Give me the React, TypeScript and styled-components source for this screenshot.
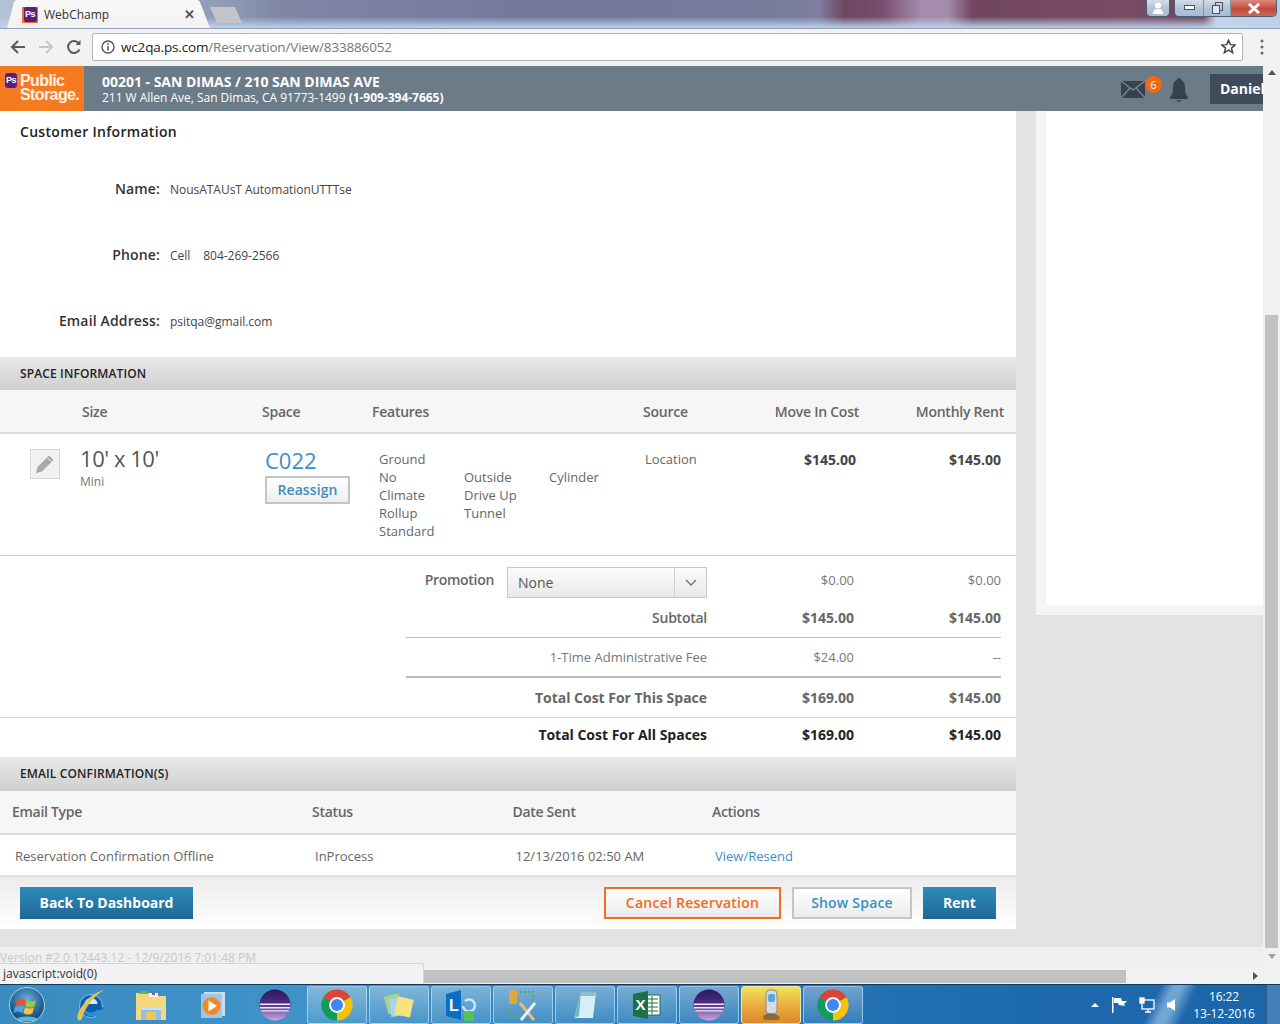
import React from "react";
import styled, { createGlobalStyle } from "styled-components";

const Global = createGlobalStyle`
  html, body { margin: 0; padding: 0; overflow: hidden; }
  body { font-family: "Open Sans", "Liberation Sans", sans-serif; background: #fff; }
  * { box-sizing: border-box; }
`;

const Screen = styled.div`
  width: 1280px; height: 1024px; display: flex; flex-direction: column; overflow: hidden; position: relative;
`;

/* ---------- browser chrome ---------- */
const TitleBar = styled.div`
  height: 29px; position: relative; display: flex; align-items: flex-end; padding-left: 7px; flex: none;
  background:
    linear-gradient(180deg, rgba(255,255,255,0) 0%, rgba(255,255,255,0) 60%, rgba(190,214,238,.95) 100%),
    linear-gradient(90deg, #b5c2d4 0%, #8e9ab4 18%, #7f86a6 22%, #737a9e 40%, #767b9c 60%, #7f7ea0 64%, #6f4560 66%, #7b4f70 69%, #a58cad 72%, #a58cad 74%, #70455f 76%, #7a4d66 88%, #6f4560 94%, #c6d3e4 95%, #b9cde5 100%);
  border-bottom: 1px solid #8fa0b5;
`;
const Tab = styled.div`
  width: 203px; height: 28px; background: linear-gradient(#f8f8f8, #f2f2f2);
  clip-path: polygon(0 100%, 3.500% 6%, 4.500% 0, 94% 0, 95% 6%, 100% 100%);
  display: flex; align-items: center; padding: 1px 15px 0 15px; gap: 6px; font-size: 12px; color: #333;
`;
const TabIcon = styled.span`
  width: 16px; height: 16px; background: #f26f21; display: flex; align-items: center; justify-content: center;
`;
const Favicon = styled.span`
  width: 13px; height: 15px; border-radius: 2px; background: #5a1e7e; color: #fff;
  font: bold 9px/15px "Liberation Sans", sans-serif; text-align: center; letter-spacing: -.5px;
`;
const TabTitle = styled.span` flex: 1; `;
const TabClose = styled.span` font-size: 13px; color: #555; font-family: "Liberation Sans", sans-serif; font-weight: bold; `;
const NewTab = styled.div`
  width: 32px; height: 16px; margin-bottom: 5px; background: #c3c5ca;
  clip-path: polygon(22% 100%, 0 0, 78% 0, 100% 100%);
`;
const WindowControls = styled.div`
  position: absolute; top: 0; right: 3px; display: flex; gap: 4px; height: 17px;
`;
const WinGroup = styled.div`
  display: flex; height: 17px; border: 1px solid #4f5f73; border-top: 0; border-radius: 0 0 5px 5px; overflow: hidden;
`;
const WinButton = styled.div<{ $w: number; $close?: boolean }>`
  width: ${p => p.$w}px; height: 16px; display: flex; align-items: center; justify-content: center;
  background: ${p => p.$close ? "linear-gradient(#d98a7d, #c6483a 55%, #c46a5d)" : "linear-gradient(#d3dde9, #b2c3d6 50%, #a6bcd3)"};
  & + & { border-left: 1px solid #8296ab; }
`;

const Toolbar = styled.div`
  height: 37px; background: #f2f2f2; display: flex; align-items: center; flex: none; padding-bottom: 2px;
`;
const NavIcon = styled.span<{ $w: number; $faded?: boolean }>`
  width: ${p => p.$w}px; display: flex; justify-content: center; color: ${p => p.$faded ? "#c6c6c6" : "#5a5a5a"};
`;
const NavCluster = styled.div` display: flex; width: 92px; padding-left: 6px; `;
const Omnibox = styled.div`
  width: 1151px; height: 28px; background: #fff; border: 1px solid #b4b4b4; border-radius: 2px;
  display: flex; align-items: center; padding: 0 6px 0 8px; gap: 6px; font-size: 13.5px; color: #222; letter-spacing: -.17px;
`;
const Url = styled.span` flex: 1; `;
const UrlDim = styled.span` color: #777; `;
const Menu = styled.div` flex: 1; display: flex; justify-content: center; `;

/* ---------- app viewport ---------- */
const Viewport = styled.div`
  flex: 1; min-height: 0; display: grid; grid-template-columns: 1263px 17px; grid-template-rows: 902px 16px; position: relative;
`;
const Page = styled.div` display: flex; flex-direction: column; overflow: hidden; `;
const AppHeader = styled.header`
  height: 45px; flex: none; background: #6b7b88; display: flex; align-items: stretch; color: #fff;
`;
const Logo = styled.div`
  width: 84px; background: #f47b20; display: flex; padding: 7px 0 0 5px; gap: 3px;
`;
const LogoBadge = styled.span`
  width: 12px; height: 15px; border-radius: 3px; background: #5a1e7e; font: bold 9px/15px "Liberation Sans", sans-serif; text-align: center; color: #fff; letter-spacing: -.5px;
`;
const LogoText = styled.div`
  font: bold 16px/14px "Liberation Sans", sans-serif; letter-spacing: -.6px; color: #fff1e4; margin-top: 1px;
`;
const SiteInfo = styled.div` margin-left: 18px; padding-top: 8px; flex: 1; `;
const SiteTitle = styled.div` font-size: 14px; line-height: 16px; font-weight: 700; letter-spacing: -.02px; `;
const SiteAddress = styled.div` font-size: 12px; line-height: 15px; letter-spacing: -.02px; `;
const Bold = styled.b` font-weight: 700; `;
const HeaderTools = styled.div` display: flex; align-items: center; position: relative; `;
const Mail = styled.span` display: flex; margin: 2px 2px 0 0; `;
const Badge = styled.span`
  width: 17px; height: 17px; border-radius: 50%; background: #f26a10; color: #fff; font-size: 11px; line-height: 17px; text-align: center;
  margin: -9px 0 0 -2px;
`;
const Bell = styled.span` display: flex; margin: 2px 0 0 7px; `;
const UserBox = styled.div`
  width: 53px; height: 30px; margin-left: 21px; background: #3f4b58; font-size: 14px; font-weight: 700; line-height: 30px;
  padding-left: 10px; overflow: hidden; white-space: nowrap;
`;

const Columns = styled.div` height: 836px; flex: none; display: flex; background: #e3e3e3; `;
const Main = styled.main` width: 1016px; height: 818px; background: #fff; display: flex; flex-direction: column; flex: none; `;
const Aside = styled.aside` width: 227px; height: 504px; margin-left: 20px; background: #f5f5f5; padding: 0 0 10px 10px; `;
const AsideInner = styled.div` height: 100%; background: #fff; `;
const VersionBar = styled.div`
  height: 21px; background: #efefef; font-size: 12px; line-height: 21px; color: #c8c8c8; flex: none;
`;

const CustomerHeading = styled.h2`
  margin: 0; height: 45px; padding: 12px 0 0 20px; font-size: 14px; line-height: 18px; font-weight: 600; color: #222; letter-spacing: .3px;
`;
const InfoRow = styled.div`
  height: 66px; display: grid; grid-template-columns: 160px 1fr; column-gap: 10px; align-items: center;
`;
const InfoList = styled.div` height: 201px; `;
const InfoLabel = styled.div` text-align: right; font-size: 14px; font-weight: 600; color: #333; letter-spacing: .15px; margin-top: -2px; `;
const InfoValue = styled.div` font-size: 12px; color: #444; letter-spacing: -.03px; `;
const PhoneType = styled.span` margin-right: 13px; `;

const SectionBar = styled.div<{ $h: number; $pad?: number }>`
  height: ${p => p.$h}px; flex: none; padding: 0 0 ${p => p.$pad || 0}px 20px; display: flex; align-items: center;
  background: linear-gradient(#e9e9e9, #cfcfcf); font-size: 12px; font-weight: 600; color: #222; letter-spacing: .13px;
`;
const SpaceHead = styled.div`
  height: 44px; flex: none; background: #f6f6f6; border-bottom: 2px solid #ddd; display: grid; align-items: center;
  grid-template-columns: 82px 180px 110px 271px 70px 146px 145px; padding-right: 12px;
  font-size: 14px; font-weight: 600; color: #666; letter-spacing: -.25px;
`;
const HeadCell = styled.div<{ $col?: number; $right?: boolean }>`
  ${p => p.$col ? `grid-column: ${p.$col};` : ""}
  ${p => p.$right ? "text-align: right;" : ""}
`;
const SpaceRow = styled.div`
  height: 122px; flex: none; border-bottom: 1px solid #ccc; display: grid; align-items: start;
  grid-template-columns: 30px 50px 185px 114px 266px 65px 146px 145px; padding-top: 15px;
`;
const EditBtn = styled.div`
  grid-column: 2; width: 30px; height: 30px; background: #f2f2f2; border: 1px solid #d8d8d8; display: flex; align-items: center; justify-content: center;
`;
const SizeValue = styled.div` font-size: 22px; line-height: 22px; margin-top: -2px; color: #555; letter-spacing: -.45px; `;
const SizeNote = styled.div` font-size: 12px; line-height: 20px; color: #777; margin-top: 3px; `;
const SpaceLink = styled.div` font-size: 22px; line-height: 26px; color: #3d8fc2; margin-top: -2px; `;
const ReassignBtn = styled.div`
  width: 85px; height: 28px; margin-top: 3px; border: 2px solid #c4c4c4; background: linear-gradient(#fff, #eee);
  text-align: center; font-size: 14px; line-height: 24px; font-weight: 600; color: #3d8fc2; letter-spacing: .1px;
`;
const FeatureGrid = styled.div`
  display: grid; grid-template-columns: 85px 85px 1fr; font-size: 13px; line-height: 18px; color: #666; margin-top: 1px;
`;
const FeatureCol = styled.div<{ $offset?: boolean }>` ${p => p.$offset ? "padding-top: 18px;" : ""} `;
const SourceText = styled.div` font-size: 13px; line-height: 18px; color: #666; margin-top: 1px; `;
const Price = styled.div` text-align: right; font-size: 14px; line-height: 20px; font-weight: 700; color: #444; margin-top: 1px; `;

const Summary = styled.div` flex: none; height: 201px; display: flex; flex-direction: column; `;
const SumRow = styled.div<{ $h: number; $line?: number; $pad?: number; $color?: string; $bold?: boolean; $full?: boolean }>`
  height: ${p => p.$h}px; flex: none; display: grid; align-items: center; grid-template-columns: 301px 147px 147px;
  margin: ${p => p.$full ? "0" : "0 15px 0 406px"};
  padding: 0 ${p => p.$full ? "15px" : "0"} ${p => p.$pad || 0}px ${p => p.$full ? "406px" : "0"};
  ${p => p.$line ? `border-bottom: ${p.$line}px solid ${p.$full ? "#d9d9d9" : "#bbb"};` : ""}
  font-size: ${p => p.$bold ? "14px" : "13px"}; font-weight: ${p => p.$bold ? 700 : 400};
  color: ${p => p.$color || "#777"}; letter-spacing: ${p => p.$bold ? "-.02px" : "0"};
`;
const SumCell = styled.div` text-align: right; `;
const SubLabel = styled.div` text-align: right; font-weight: 600; letter-spacing: -.25px; `;
const PromoLabelCell = styled.div` display: flex; justify-content: flex-end; align-items: center; gap: 13px; `;
const PromoLabel = styled.span` font-size: 14px; font-weight: 600; color: #666; letter-spacing: -.3px; `;
const SelectBox = styled.div`
  width: 200px; height: 31px; margin-top: 6px; border: 1px solid #c9c9c9; background: linear-gradient(#fbfbfb, #e9e9e9);
  display: flex; align-items: center; font-size: 14px; color: #555;
`;
const SelectText = styled.span` flex: 1; padding-left: 10px; `;
const SelectArrow = styled.span` width: 32px; height: 100%; border-left: 1px solid #cfcfcf; display: flex; align-items: center; justify-content: center; `;

const EmailHead = styled.div`
  height: 44px; flex: none; background: #f6f6f6; border-bottom: 2px solid #ddd; display: grid; align-items: center;
  grid-template-columns: 300px 200.500px 199.500px 1fr; padding: 0 0 2px 12px; font-size: 14px; font-weight: 600; color: #666; letter-spacing: -.3px;
`;
const EmailRow = styled.div`
  height: 40px; flex: none; display: grid; align-items: center; padding: 2px 0 0 15px;
  grid-template-columns: 300px 200.500px 199.500px 1fr; font-size: 13px; color: #666;
`;
const EmailLink = styled.span` color: #3d8fc2; `;
const Footer = styled.div`
  flex: 1; border-top: 2px solid #e2e2e2; background: linear-gradient(#ececec, #fff); display: flex; align-items: center; padding: 0 20px; gap: 11px;
`;
const Spacer = styled.div` flex: 1; `;
const Btn = styled.div<{ $kind: "primary" | "danger" | "plain"; $w: number }>`
  width: ${p => p.$w}px; height: 32px; text-align: center; font-size: 14px; font-weight: 700;
  ${p => p.$kind === "primary" ? "background: linear-gradient(#2d8abd, #1f6a94); color: #fff; line-height: 32px; border-bottom: 1px solid #1d6288;" : ""}
  ${p => p.$kind === "danger" ? "background: linear-gradient(#fff, #ebebeb); color: #f26a21; border: 2px solid #ee6f1f; line-height: 28px; font-weight: 600; letter-spacing: .25px;" : ""}
  ${p => p.$kind === "plain" ? "background: linear-gradient(#fff, #ebebeb); color: #3d8fc2; border: 2px solid #c6c6c6; line-height: 28px; font-weight: 600; letter-spacing: .2px;" : ""}
`;

/* ---------- scrollbars ---------- */
const VScroll = styled.div` background: #f1f1f1; display: flex; flex-direction: column; align-items: center; `;
const ArrowUp = styled.span`
  margin-top: 4px; border: 4px solid transparent; border-top: 0; border-bottom: 5px solid #505050; flex: none;
`;
const ScrollGap = styled.div` height: 240px; flex: none; `;
const VThumb = styled.div` width: 13px; height: 633px; background: #c1c1c1; flex: none; `;
const ArrowDown = styled.span`
  margin-top: 6px; border: 4px solid transparent; border-bottom: 0; border-top: 5px solid #a3a3a3; flex: none;
`;
const HScroll = styled.div` background: #f1f1f1; height: 16px; display: flex; align-items: center; `;
const HThumb = styled.div` width: 1126px; height: 13px; background: #c1c1c1; flex: none; `;
const ArrowRight = styled.span`
  margin-left: 127px; border: 4px solid transparent; border-right: 0; border-left: 5px solid #505050;
`;
const Corner = styled.div` background: #f1f1f1; `;
const StatusBubble = styled.div`
  position: absolute; left: 0; bottom: 0; width: 424px; height: 21px; background: #f2f2f2; border: 1px solid #d4d4d4; border-left: 0; border-bottom: 0;
  border-radius: 0 3px 0 0; font-size: 12px; line-height: 20px; padding-left: 3px; color: #333; z-index: 2;
`;

/* ---------- taskbar ---------- */
const Taskbar = styled.div`
  height: 40px; flex: none; display: flex; align-items: center; border-top: 1px solid #12395c;
  background:
    linear-gradient(115deg, transparent 0 1052px, rgba(180,215,245,.55) 1064px 1072px, transparent 1086px),
    linear-gradient(90deg, #3a8bc0 0%, #3f93c8 25%, #2f80bd 50%, #1f6cb0 75%, #1c64a8 100%);
`;
const Orb = styled.span` width: 60px; display: flex; justify-content: center; flex: none; padding-right: 6px; `;
const PlainIcon = styled.span<{ $w: number }>` width: ${p => p.$w}px; display: flex; justify-content: center; flex: none; `;
const TaskButton = styled.span<{ $active?: boolean }>`
  width: 60px; height: 38px; margin-right: 2px; flex: none; display: flex; align-items: center; justify-content: center; border-radius: 3px;
  border: 1px solid ${p => p.$active ? "#f3e6b0" : "rgba(220,240,255,.55)"};
  background: ${p => p.$active ? "linear-gradient(#efe35a, #e9a43a 60%, #dc8a2c)" : "linear-gradient(rgba(255,255,255,.35), rgba(255,255,255,.08))"};
`;
const Tray = styled.div` margin-left: auto; display: flex; align-items: center; gap: 12px; color: #fff; `;
const TrayUp = styled.span` border: 4px solid transparent; border-top: 0; border-bottom: 4px solid #fff; margin-right: 1px; `;
const Clock = styled.div` width: 62px; text-align: center; font-size: 12px; line-height: 17px; margin-left: 4px; letter-spacing: -.1px; `;
const ShowDesktop = styled.div` width: 14px; height: 39px; margin-left: -1px; border-left: 1px solid #2a5d8d; background: rgba(255,255,255,.18); `;

const ChromeIcon = () => (
  <svg width="34" height="34" viewBox="0 0 24 24">
    <path d="M12 12 2.470 6.500A11 11 0 0 1 21.530 6.500Z" fill="#db4437" />
    <path d="M12 12 21.530 6.500A11 11 0 0 1 12 23Z" fill="#f4c20d" />
    <path d="M12 12 12 23A11 11 0 0 1 2.470 6.500Z" fill="#0f9d58" />
    <circle cx="12" cy="12" r="5.600" fill="#fff" />
    <circle cx="12" cy="12" r="4.300" fill="#4285f4" />
  </svg>
);
const EclipseIcon = () => (
  <svg width="32" height="32" viewBox="0 0 32 32">
    <defs>
      <linearGradient id="eclipseBall" x1="0" y1="0" x2="0" y2="1">
        <stop offset="0" stopColor="#2c1a5c" /><stop offset=".45" stopColor="#4c2c84" /><stop offset="1" stopColor="#c7a8df" />
      </linearGradient>
    </defs>
    <circle cx="16" cy="16" r="15.500" fill="url(#eclipseBall)" />
    <path d="M1 14.500h30v1.600H1zM1 18h30v1.400H1zM2.200 21.200h27.600v1.200H2.200z" fill="#f0e8f8" />
  </svg>
);

export default function App() {
  return (
    <Screen>
      <Global />
      <TitleBar>
        <Tab>
          <TabIcon><Favicon>Ps</Favicon></TabIcon>
          <TabTitle>WebChamp</TabTitle>
          <TabClose>✕</TabClose>
        </Tab>
        <NewTab />
        <WindowControls>
          <WinGroup>
            <WinButton $w={22}>
              <svg width="10" height="12" viewBox="0 0 10 12"><circle cx="5" cy="3.500" r="3" fill="#fff" /><path d="M0 12c0-4 2-5 5-5s5 1 5 5z" fill="#fff" /></svg>
            </WinButton>
          </WinGroup>
          <WinGroup>
            <WinButton $w={28}><svg width="11" height="6" viewBox="0 0 11 6"><rect x=".5" y=".5" width="10" height="4" fill="#fff" stroke="#44556a" /></svg></WinButton>
            <WinButton $w={27}><svg width="11" height="12" viewBox="0 0 11 12"><rect x="3.500" y=".5" width="7" height="8" fill="none" stroke="#44556a" /><rect x=".5" y="3.500" width="7" height="8" fill="#dfe7f0" stroke="#44556a" /></svg></WinButton>
            <WinButton $w={46} $close><svg width="14" height="11" viewBox="0 0 14 11"><path d="M2 1l10 9M12 1 2 10" stroke="#fff" strokeWidth="3" /></svg></WinButton>
          </WinGroup>
        </WindowControls>
      </TitleBar>

      <Toolbar>
        <NavCluster>
          <NavIcon $w={24}><svg width="16" height="16" viewBox="0 0 16 16" fill="none" stroke="currentColor" strokeWidth="2"><path d="M15 8H2M8 2 2 8l6 6" /></svg></NavIcon>
          <NavIcon $w={32} $faded><svg width="16" height="16" viewBox="0 0 16 16" fill="none" stroke="currentColor" strokeWidth="2"><path d="M1 8h13M8 2l6 6-6 6" /></svg></NavIcon>
          <NavIcon $w={24}><svg width="16" height="16" viewBox="0 0 16 16" fill="none" stroke="currentColor" strokeWidth="2"><path d="M13.500 10.500A6 6 0 1 1 13 4.500" /><path d="M14.500 1v5h-5z" fill="currentColor" stroke="none" /></svg></NavIcon>
        </NavCluster>
        <Omnibox>
          <svg width="14" height="14" viewBox="0 0 14 14" fill="none" stroke="#555"><circle cx="7" cy="7" r="6" strokeWidth="1.400" /><path d="M7 6v4.500M7 3.200v1.600" strokeWidth="1.600" /></svg>
          <Url>wc2qa.ps.com<UrlDim>/Reservation/View/833886052</UrlDim></Url>
          <svg width="15" height="15" viewBox="0 0 24 24" fill="none" stroke="#444" strokeWidth="2.400"><path d="m12 2 3 7 7.500 .6-5.700 4.900 1.800 7.300L12 17.900 5.400 21.800l1.800-7.300L1.500 9.600 9 9z" /></svg>
        </Omnibox>
        <Menu><svg width="4" height="16" viewBox="0 0 4 16" fill="#666"><circle cx="2" cy="2" r="1.500" /><circle cx="2" cy="8" r="1.500" /><circle cx="2" cy="14" r="1.500" /></svg></Menu>
      </Toolbar>

      <Viewport>
        <Page>
          <AppHeader>
            <Logo>
              <LogoBadge>Ps</LogoBadge>
              <LogoText>Public<br />Storage.</LogoText>
            </Logo>
            <SiteInfo>
              <SiteTitle>00201 - SAN DIMAS / 210 SAN DIMAS AVE</SiteTitle>
              <SiteAddress>211 W Allen Ave, San Dimas, CA 91773-1499 <Bold>(1-909-394-7665)</Bold></SiteAddress>
            </SiteInfo>
            <HeaderTools>
              <Mail><svg width="24" height="17" viewBox="0 0 24 17"><rect width="24" height="17" rx="1" fill="#36434f" /><path d="M0 0l12 9L24 0M0 17l9-10M24 17 15 7" fill="none" stroke="#7d8c99" strokeWidth="1.200" /></svg></Mail>
              <Badge>6</Badge>
              <Bell><svg width="20" height="24" viewBox="0 0 20 24"><path d="M10 0c1.500 0 2 1 2 2 3 1 4 4 4 8 0 4 1 7 3 9H1c2-2 3-5 3-9 0-4 1-7 4-8 0-1 .5-2 2-2z" fill="#36434f" /><rect x="1" y="19" width="18" height="2" rx="1" fill="#36434f" /><path d="M7 22h6l-3 2z" fill="#36434f" /></svg></Bell>
              <UserBox>Daniel</UserBox>
            </HeaderTools>
          </AppHeader>

          <Columns>
            <Main>
              <CustomerHeading>Customer Information</CustomerHeading>
              <InfoList>
                <InfoRow><InfoLabel>Name:</InfoLabel><InfoValue>NousATAUsT AutomationUTTTse</InfoValue></InfoRow>
                <InfoRow><InfoLabel>Phone:</InfoLabel><InfoValue><PhoneType>Cell</PhoneType>804-269-2566</InfoValue></InfoRow>
                <InfoRow><InfoLabel>Email Address:</InfoLabel><InfoValue>psitqa@gmail.com</InfoValue></InfoRow>
              </InfoList>

              <SectionBar $h={33}>SPACE INFORMATION</SectionBar>
              <SpaceHead>
                <HeadCell $col={2}>Size</HeadCell>
                <HeadCell>Space</HeadCell>
                <HeadCell>Features</HeadCell>
                <HeadCell>Source</HeadCell>
                <HeadCell $right>Move In Cost</HeadCell>
                <HeadCell $right>Monthly Rent</HeadCell>
              </SpaceHead>
              <SpaceRow>
                <EditBtn>
                  <svg width="20" height="20" viewBox="0 0 20 20" fill="#a8a8a8"><path d="M14 1.500 18.500 6 7 17.500 1 19l1.500-6z" /><path d="M12.500 4 16 7.500" stroke="#f2f2f2" strokeWidth="1" /></svg>
                </EditBtn>
                <div>
                  <SizeValue>10' x 10'</SizeValue>
                  <SizeNote>Mini</SizeNote>
                </div>
                <div>
                  <SpaceLink>C022</SpaceLink>
                  <ReassignBtn>Reassign</ReassignBtn>
                </div>
                <FeatureGrid>
                  <FeatureCol>Ground<br />No<br />Climate<br />Rollup<br />Standard</FeatureCol>
                  <FeatureCol $offset>Outside<br />Drive Up<br />Tunnel</FeatureCol>
                  <FeatureCol $offset>Cylinder</FeatureCol>
                </FeatureGrid>
                <SourceText>Location</SourceText>
                <Price>$145.00</Price>
                <Price>$145.00</Price>
              </SpaceRow>
              <Summary>
                <SumRow $h={47}>
                  <PromoLabelCell><PromoLabel>Promotion</PromoLabel><SelectBox><SelectText>None</SelectText><SelectArrow><svg width="12" height="8" viewBox="0 0 12 8" fill="none" stroke="#777" strokeWidth="1.500"><path d="m1 1 5 5 5-5" /></svg></SelectArrow></SelectBox></PromoLabelCell>
                  <SumCell>$0.00</SumCell><SumCell>$0.00</SumCell>
                </SumRow>
                <SumRow $h={35} $line={1} $pad={5} $bold $color="#666">
                  <SubLabel>Subtotal</SubLabel><SumCell>$145.00</SumCell><SumCell>$145.00</SumCell>
                </SumRow>
                <SumRow $h={40} $line={2}>
                  <SumCell>1-Time Administrative Fee</SumCell><SumCell>$24.00</SumCell><SumCell>--</SumCell>
                </SumRow>
                <SumRow $h={40} $line={1} $bold $color="#666" $full>
                  <SumCell>Total Cost For This Space</SumCell><SumCell>$169.00</SumCell><SumCell>$145.00</SumCell>
                </SumRow>
                <SumRow $h={39} $pad={6} $bold $color="#222" $full>
                  <SumCell>Total Cost For All Spaces</SumCell><SumCell>$169.00</SumCell><SumCell>$145.00</SumCell>
                </SumRow>
              </Summary>

              <SectionBar $h={34} $pad={2}>EMAIL CONFIRMATION(S)</SectionBar>
              <EmailHead><div>Email Type</div><div>Status</div><div>Date Sent</div><div>Actions</div></EmailHead>
              <EmailRow>
                <div>Reservation Confirmation Offline</div><div>InProcess</div><div>12/13/2016 02:50 AM</div><EmailLink>View/Resend</EmailLink>
              </EmailRow>
              <Footer>
                <Btn $kind="primary" $w={173}>Back To Dashboard</Btn>
                <Spacer />
                <Btn $kind="danger" $w={177}>Cancel Reservation</Btn>
                <Btn $kind="plain" $w={120}>Show Space</Btn>
                <Btn $kind="primary" $w={73}>Rent</Btn>
              </Footer>
            </Main>
            <Aside><AsideInner /></Aside>
          </Columns>
          <VersionBar>Version #2.0.12443.12 - 12/9/2016 7:01:48 PM</VersionBar>
        </Page>
        <VScroll><ArrowUp /><ScrollGap /><VThumb /><ArrowDown /></VScroll>
        <HScroll><HThumb /><ArrowRight /></HScroll>
        <Corner />
        <StatusBubble>javascript:void(0)</StatusBubble>
      </Viewport>

      <Taskbar>
        <Orb>
          <svg width="38" height="38" viewBox="0 0 38 38">
            <defs>
              <radialGradient id="orbGlow" cx=".5" cy=".35" r=".7"><stop offset="0" stopColor="#6fb0d8" /><stop offset=".7" stopColor="#1c5a8c" /><stop offset="1" stopColor="#13406a" /></radialGradient>
            </defs>
            <circle cx="19" cy="19" r="17.500" fill="url(#orbGlow)" stroke="#a7d4ec" />
            <path d="M9 14c3-2 6-2 9 0l-1.500 6c-3-2-6-2-9 0z" fill="#e4572e" />
            <path d="M19 14c3 2 6 2 9 0l-1.500 6c-3 2-6 2-9 0z" fill="#9ccc3c" />
            <path d="M7 21c3-2 6-2 9 0l-1.500 6c-3-2-6-2-9 0z" fill="#4aa8e8" />
            <path d="M17 21c3 2 6 2 9 0l-1.500 6c-3 2-6 2-9 0z" fill="#f7c33c" />
            <ellipse cx="19" cy="33" rx="10" ry="2.500" fill="#7fe0f0" opacity=".7" />
          </svg>
        </Orb>
        <PlainIcon $w={60}>
          <svg width="32" height="34" viewBox="0 0 32 34">
            <circle cx="17" cy="18" r="11.500" fill="#0b5fae" stroke="#7fc4ef" strokeWidth="1" />
            <path d="M10.500 16a6.500 6 0 0 1 13 0z" fill="#d8eefc" />
            <path d="M10 19.500h19v2H10z" fill="#0b5fae" />
            <path d="M11 21.500c2 4 9 4 11.500 .5h6c-1 3-3 5-5 6h-9l-4-3z" fill="#2f8fdc" />
            <path d="M4 32C0 27 14 5 30 2c-9 5-20 18-22 29-1 1-3 2-4 1z" fill="#e1c450" />
          </svg>
        </PlainIcon>
        <PlainIcon $w={62}>
          <svg width="32" height="34" viewBox="0 0 32 34">
            <path d="M1 5h13l3 3h14v24H1z" fill="#f4d77e" />
            <rect x="4" y="3" width="9" height="3" fill="#5cb85c" /><rect x="14" y="5" width="9" height="4" fill="#f1f4f6" /><rect x="17" y="5" width="3" height="2" fill="#d0443a" />
            <path d="M6 20h20v12H6z" fill="#8dc0e2" /><rect x="11" y="24" width="10" height="8" fill="#f2c45e" /><rect x="6" y="20" width="20" height="2" fill="#c6e1f2" />
          </svg>
        </PlainIcon>
        <PlainIcon $w={61}>
          <svg width="26" height="28" viewBox="0 0 26 28"><rect x="4" y="1" width="21" height="24" fill="#c9dfee" /><rect x="1" y="3" width="21" height="24" fill="#9fc6e4" /><circle cx="11.500" cy="15" r="9" fill="#f08a24" /><path d="M8.500 9.500 17 15l-8.500 5.500z" fill="#fff" /></svg>
        </PlainIcon>
        <PlainIcon $w={64}><EclipseIcon /></PlainIcon>
        <TaskButton><ChromeIcon /></TaskButton>
        <TaskButton><svg width="32" height="30" viewBox="0 0 32 30"><rect x="3" y="5" width="15" height="18" transform="rotate(-15 10 14)" fill="#a5d48a" /><rect x="7" y="8" width="15" height="18" transform="rotate(-8 14 17)" fill="#a9d4ea" /><rect x="13" y="8" width="16" height="18" transform="rotate(12 21 17)" fill="#f7e27c" /></svg></TaskButton>
        <TaskButton><svg width="34" height="32" viewBox="0 0 34 32"><path d="M2 5 17 1v30L2 27z" fill="#0a6fc2" /><text x="5" y="22" fontSize="16" fontWeight="700" fill="#fff" fontFamily="Liberation Sans">L</text><path d="M21 12a6 6 0 1 1-2 5" fill="none" stroke="#cfe5f6" strokeWidth="2.500" /><rect x="20" y="22" width="10" height="10" fill="#52c35a" /></svg></TaskButton>
        <TaskButton><svg width="34" height="34" viewBox="0 0 34 34"><rect x="3" y="2" width="8" height="14" rx="2" fill="#e0a93d" /><path d="M14 4h13v10M3 20v9h11" fill="none" stroke="#4fae58" strokeWidth="2" strokeDasharray="2 2" /><path d="M14 15l14 17" stroke="#e6c078" strokeWidth="3" /><path d="M29 15 15 32" stroke="#eef1f4" strokeWidth="3" /></svg></TaskButton>
        <TaskButton><svg width="28" height="32" viewBox="0 0 28 32"><path d="M10 3h15l-3 26H3z" fill="#d8eef6" /><path d="M10 3h15l-1 4H9.500z" fill="#8bbdd5" /><path d="M10 3 3 29l5-2z" fill="#6fb7c4" /></svg></TaskButton>
        <TaskButton><svg width="30" height="30" viewBox="0 0 30 30"><rect x="12" y="5" width="16" height="20" fill="#fff" stroke="#1e7145" /><path d="M15 9h11M15 13h11M15 17h11M15 21h11M20 6v18" stroke="#1e7145" /><path d="M1 4 16 1v28L1 26z" fill="#1e7145" /><text x="3.500" y="20" fontSize="15" fontWeight="700" fill="#fff" fontFamily="Liberation Sans">X</text></svg></TaskButton>
        <TaskButton><EclipseIcon /></TaskButton>
        <TaskButton $active><svg width="24" height="36" viewBox="0 0 24 36"><rect x="7" y="3" width="11" height="24" rx="4" fill="#d5dde2" stroke="#8b8b8b" /><rect x="9" y="7" width="7" height="8" rx="2" fill="#5aa6e2" /><path d="M4 30c4-6 12-4 17 0l-2 3H5z" fill="#8a6a3c" /></svg></TaskButton>
        <TaskButton><ChromeIcon /></TaskButton>
        <Tray>
          <TrayUp />
          <svg width="15" height="16" viewBox="0 0 15 16" fill="#fff"><rect width="1.500" height="16" /><path d="M2 1h7l1 3h5l-3 3 1 2-6-1-1-2H2z" /></svg>
          <svg width="16" height="16" viewBox="0 0 16 16" fill="none" stroke="#fff" strokeWidth="1.300"><rect x="3" y="3" width="12" height="9" /><path d="M6 15h6M9 12v3" /><rect x="1" y="1" width="4" height="5" fill="#fff" /></svg>
          <svg width="10" height="14" viewBox="0 0 10 14" fill="#fff"><path d="M0 4.500h3L8 1v12L3 9.500H0z" /></svg>
          <Clock>16:22<br />13-12-2016</Clock>
          <ShowDesktop />
        </Tray>
      </Taskbar>
    </Screen>
  );
}
